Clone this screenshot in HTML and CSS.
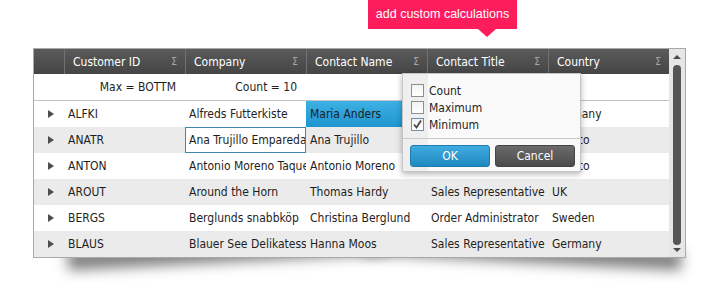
FILE: index.html
```html
<!DOCTYPE html>
<html lang="en">
<head>
  <meta charset="UTF-8">
  <title>Grid summaries</title>
  <link rel="stylesheet" href="styles.css">
</head>
<body>
  <div class="stage">
    <div class="callout">add custom calculations</div>

    <div class="grid-wrap">
      <div class="grid">
        <div class="grid-main">
          <div class="row head">
            <div class="hcell indent"></div>
            <div class="hcell"><span>Customer ID</span><i>&Sigma;</i></div>
            <div class="hcell"><span>Company</span><i>&Sigma;</i></div>
            <div class="hcell"><span>Contact Name</span><i>&Sigma;</i></div>
            <div class="hcell"><span>Contact Title</span><i>&Sigma;</i></div>
            <div class="hcell"><span>Country</span><i>&Sigma;</i></div>
          </div>
          <div class="row summary">
            <div></div>
            <div class="sum">Max = BOTTM</div>
            <div class="sum">Count = 10</div>
            <div></div>
            <div></div>
            <div></div>
          </div>
          <div class="row">
            <div class="expand"><b></b></div>
            <div class="cell">ALFKI</div>
            <div class="cell">Alfreds Futterkiste</div>
            <div class="cell selected">Maria Anders</div>
            <div class="cell">Sales Representative</div>
            <div class="cell">Germany</div>
          </div>
          <div class="row alt">
            <div class="expand"><b></b></div>
            <div class="cell">ANATR</div>
            <div class="cell focused">Ana Trujillo Emparedados y helados</div>
            <div class="cell">Ana Trujillo</div>
            <div class="cell">Owner</div>
            <div class="cell">Mexico</div>
          </div>
          <div class="row">
            <div class="expand"><b></b></div>
            <div class="cell">ANTON</div>
            <div class="cell">Antonio Moreno Taquería</div>
            <div class="cell">Antonio Moreno</div>
            <div class="cell">Owner</div>
            <div class="cell">Mexico</div>
          </div>
          <div class="row alt">
            <div class="expand"><b></b></div>
            <div class="cell">AROUT</div>
            <div class="cell">Around the Horn</div>
            <div class="cell">Thomas Hardy</div>
            <div class="cell">Sales Representative</div>
            <div class="cell">UK</div>
          </div>
          <div class="row">
            <div class="expand"><b></b></div>
            <div class="cell">BERGS</div>
            <div class="cell">Berglunds snabbköp</div>
            <div class="cell">Christina Berglund</div>
            <div class="cell">Order Administrator</div>
            <div class="cell">Sweden</div>
          </div>
          <div class="row alt">
            <div class="expand"><b></b></div>
            <div class="cell">BLAUS</div>
            <div class="cell">Blauer See Delikatessen</div>
            <div class="cell">Hanna Moos</div>
            <div class="cell">Sales Representative</div>
            <div class="cell">Germany</div>
          </div>
        </div>

        <div class="scrollbar">
          <div class="arrow up"></div>
          <div class="thumb"></div>
          <div class="arrow down"></div>
        </div>
      </div>

      <!-- summary picker for the Contact Name column -->
      <div class="popup">
        <div class="options">
          <label class="option"><span class="box"></span>Count</label>
          <label class="option"><span class="box"></span>Maximum</label>
          <label class="option"><span class="box checked"><svg width="11" height="11" viewBox="0 0 11 11"><path d="M2 5.5 L4.5 8.5 L9 1.5" fill="none" stroke="#4a4a4a" stroke-width="1.8"/></svg></span>Minimum</label>
        </div>
        <div class="actions">
          <button class="btn ok">OK</button>
          <button class="btn cancel">Cancel</button>
        </div>
      </div>
    </div>
  </div>
</body>
</html>
```

FILE: styles.css
```css
* {
  box-sizing: border-box;
}
body {
  margin: 0;
  background: #fff;
  font-family: 'DejaVu Sans Condensed', 'DejaVu Sans', sans-serif;
  font-stretch: condensed;
  font-size: 12px;
  color: #1e1e1e;
}
.stage {
  width: 720px;
  min-height: 283px;
  padding-left: 33px;
  padding-bottom: 25px;
}
.callout {
  position: relative;
  width: 149px;
  height: 29px;
  margin-left: 335px;
  background: #fd1d5c;
  color: #fff;
  font-family: 'Liberation Sans', Arial, sans-serif;
  font-stretch: normal;
  font-size: 12.5px;
  line-height: 29px;
  text-align: center;
}
.callout::after {
  content: '';
  position: absolute;
  left: 110px;
  top: 29px;
  border-left: 9px solid transparent;
  border-right: 9px solid transparent;
  border-top: 8px solid #fd1d5c;
}
.grid-wrap {
  position: relative;
  width: 653px;
  margin-top: 19px;
}
/* lifted-corner shadow under the grid */
.grid-wrap::before,
.grid-wrap::after {
  content: '';
  position: absolute;
  bottom: 8px;
  width: 49%;
  height: 20px;
  background: #999;
  box-shadow: 0 12px 13px rgba(0, 0, 0, 0.5);
  z-index: 0;
}
.grid-wrap::before {
  left: 34px;
  transform: rotate(-3deg);
}
.grid-wrap::after {
  right: 4px;
  transform: rotate(3deg);
}
.grid {
  position: relative;
  z-index: 1;
  display: flex;
  border: 1px solid #a9a9a9;
  background: #fff;
}
.grid-main {
  width: 635px;
}
.row {
  display: grid;
  grid-template-columns: 30px repeat(5, 121px);
  height: 26px;
  background: #fff;
}
.row.alt {
  background: #ebebeb;
}
.row.head {
  height: 25px;
  background: linear-gradient(#5a5a5a, #454545);
}
.hcell {
  display: flex;
  align-items: center;
  justify-content: space-between;
  padding: 0 8px 0 8px;
  border-left: 1px solid #727272;
  color: #fff;
  white-space: nowrap;
  overflow: hidden;
}
.hcell.indent {
  border-left: none;
}
.hcell i {
  font-style: normal;
  font-size: 10px;
  color: #a8a8a8;
}
.row.summary {
  height: 27px;
  border-bottom: 1px solid #c4c4c4;
}
.sum {
  text-align: right;
  padding-right: 9px;
  line-height: 26px;
  white-space: nowrap;
}
.cell {
  padding: 0 4px;
  line-height: 26px;
  white-space: nowrap;
  overflow: hidden;
}
.cell.selected {
  background: linear-gradient(#3db1e4, #1f94cf);
}
.cell.focused {
  background: #fff;
  border: 1px solid #3f86b3;
  padding: 0 3px;
  line-height: 24px;
}
.expand {
  display: flex;
  align-items: center;
  padding-left: 14px;
}
.expand b {
  width: 0;
  height: 0;
  border-top: 4px solid transparent;
  border-bottom: 4px solid transparent;
  border-left: 6px solid #4d4d4d;
}
.scrollbar {
  width: 16px;
  display: flex;
  flex-direction: column;
  align-items: center;
  background: #e6e6e6;
  padding: 6px 0 5px;
}
.arrow {
  width: 0;
  height: 0;
  border-left: 4px solid transparent;
  border-right: 4px solid transparent;
}
.arrow.up {
  border-bottom: 4px solid #4a4a4a;
}
.arrow.down {
  border-top: 4px solid #4a4a4a;
}
.thumb {
  flex: 1;
  width: 8px;
  margin: 6px 0 3px;
  border-radius: 4px;
  background: #555;
}
.popup {
  position: absolute;
  z-index: 2;
  left: 369px;
  top: 25px;
  width: 179px;
  height: 99px;
  border: 1px solid #c5c5c5;
  background: linear-gradient(90deg, #efefef 0, #efefef 25px, #fafafa 25px);
  box-shadow: 0 2px 6px rgba(0, 0, 0, 0.3);
}
.options {
  padding: 8px 0 5px 8px;
  border-bottom: 1px solid #c9c9c9;
}
.option {
  display: flex;
  align-items: center;
  height: 17px;
  gap: 5px;
  color: #1e1e1e;
}
.box {
  display: flex;
  align-items: center;
  justify-content: center;
  width: 13px;
  height: 13px;
  border: 1px solid #8f8f8f;
  background: linear-gradient(#f2f2f2, #fff);
}
.box.checked {
  border-color: #6f8fa8;
}
.actions {
  display: flex;
  gap: 5px;
  padding: 6px 0 0 7px;
}
.btn {
  width: 80px;
  height: 22px;
  border-radius: 3px;
  color: #fff;
  font-family: inherit;
  font-size: 12px;
  padding: 0;
}
.btn.ok {
  background: linear-gradient(#3fabdf, #1f88c0);
  border: 1px solid #1c7cb2;
}
.btn.cancel {
  background: linear-gradient(#6b6b6b, #4b4b4b);
  border: 1px solid #444;
}
```
